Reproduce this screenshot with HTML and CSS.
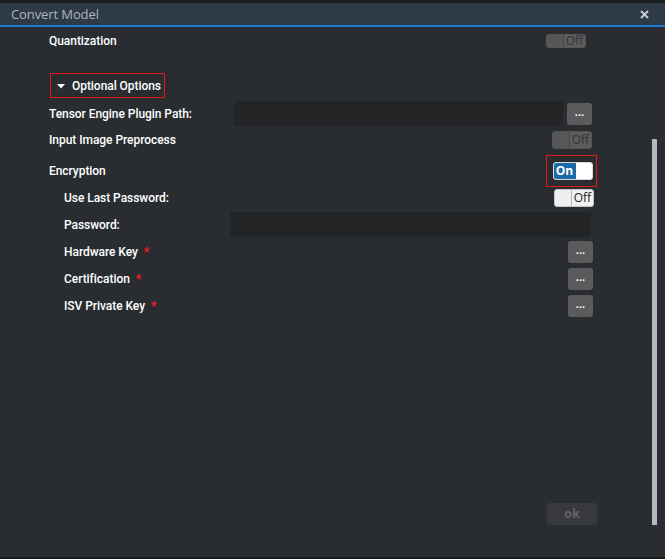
FILE: index.html
```html
<!DOCTYPE html>
<html>
<head>
<meta charset="utf-8">
<link rel="stylesheet" href="styles.css">
</head>
<body>
<div class="window">
  <div class="topstrip"></div>
  <div class="titlebar">
    <span class="title">Convert Model</span>
    <svg class="close" width="9" height="9" viewBox="0 0 9 9"><path d="M1 1 L8 8 M8 1 L1 8" stroke="#c8cdd2" stroke-width="2"/></svg>
  </div>
  <div class="content">
    <div class="row row-quant">
      <span class="label">Quantization</span>
      <span class="toggle toggle-disabled toggle-small"><span class="knob"></span><span class="ttext">Off</span></span>
    </div>
    <div class="row row-opt">
      <div class="opt-box">
        <svg class="tri" width="8" height="5" viewBox="0 0 8 5"><path d="M0 0 H8 L4 4.5 Z" fill="#ffffff"/></svg>
        <span class="label">Optional Options</span>
      </div>
    </div>
    <div class="row row-field">
      <span class="label wide">Tensor Engine Plugin Path:</span>
      <span class="input"></span>
      <span class="dots">...</span>
    </div>
    <div class="row row-toggle">
      <span class="label">Input Image Preprocess</span>
      <span class="toggle toggle-disabled t-pre"><span class="knob"></span><span class="ttext">Off</span></span>
    </div>
    <div class="row row-enc">
      <span class="label">Encryption</span>
      <span class="redbox"><span class="toggle toggle-on"><span class="ttext">On</span><span class="knob"></span></span></span>
    </div>
    <div class="row row-sub row-toggle2">
      <span class="label">Use Last Password:</span>
      <span class="toggle toggle-off"><span class="knob"></span><span class="ttext">Off</span></span>
    </div>
    <div class="row row-sub row-field2">
      <span class="label narrow">Password:</span>
      <span class="input pw"></span>
    </div>
    <div class="row row-sub row-field2">
      <span class="label narrow">Hardware Key <span class="req">*</span></span>
      <span class="input light"></span>
      <span class="dots">...</span>
    </div>
    <div class="row row-sub row-field2">
      <span class="label narrow">Certification <span class="req">*</span></span>
      <span class="input light"></span>
      <span class="dots">...</span>
    </div>
    <div class="row row-sub row-field2">
      <span class="label narrow">ISV Private Key <span class="req">*</span></span>
      <span class="input light"></span>
      <span class="dots">...</span>
    </div>
    <div class="spacer"></div>
    <div class="footer">
      <span class="ok">ok</span>
    </div>
  </div>
  <div class="scrollbar"></div>
  <div class="bottomline"></div>
</div>
</body>
</html>
```
FILE: styles.css
```css
* { box-sizing: border-box; }
html, body { margin: 0; padding: 0; }
body {
  width: 665px;
  height: 559px;
  background: #292d31;
  font-family: Roboto, "Open Sans", sans-serif;
  overflow: hidden;
}
.window {
  position: relative;
  width: 665px;
  height: 559px;
  display: flex;
  flex-direction: column;
  background: #292d31;
}
.topstrip { height: 3px; background: #1d2023; }
.titlebar {
  height: 24px;
  background: #2e3a47;
  border-bottom: 2px solid #1b78cf;
  display: flex;
  align-items: center;
  padding: 0 16px 0 11px;
}
.title {
  color: #aeb5bd;
  font-family: "Open Sans", sans-serif;
  font-size: 13px;
  flex: 1;
  letter-spacing: -0.1px;
}
.close { display: block; margin-top: 1px; }
.content {
  flex: 1;
  display: flex;
  flex-direction: column;
  padding: 5px 72px 0 49px;
}
.row {
  display: flex;
  align-items: center;
}
.label {
  color: #ffffff;
  font-size: 12px;
  font-weight: 500;
  white-space: nowrap;
  letter-spacing: -0.05px;
}
.row-quant { height: 18px; justify-content: space-between; padding-right: 7px; }
.row-opt { height: 25px; margin-top: 23px; }
.opt-box {
  border: 1px solid #e01818;
  height: 25px;
  display: flex;
  align-items: center;
  padding: 0 3px 0 6px;
  margin-left: 1px;
}
.tri { margin-right: 7px; margin-top: 1px; }
.row-field { height: 25px; margin-top: 3px; }
.label.wide { width: 185px; }
.input {
  flex: 1;
  height: 25px;
  background: #222426;
  border-radius: 3px;
}
.input.pw { background: #222426; height: 25px; }
.input.light { background: #272b2e; border-radius: 0; }
.dots {
  width: 25px;
  height: 22px;
  margin-left: 4px;
  background: #5b5b5b;
  border-radius: 3px;
  color: #ffffff;
  font-size: 11px;
  font-weight: bold;
  text-align: center;
  line-height: 20px;
}
.row-field .dots { margin-right: 1px; }
.row-toggle { height: 22px; margin-top: 3px; justify-content: space-between; padding-right: 1px; }
.row-enc { height: 32px; margin-top: 4px; justify-content: space-between; margin-right: -4px; }
.redbox {
  border: 1px solid #e01818;
  width: 51px;
  height: 32px;
  display: flex;
  align-items: center;
  justify-content: center;
  padding-left: 2px;
}
.row-sub { padding-left: 15px; }
.row-toggle2 { height: 22px; margin-top: 0; justify-content: space-between; margin-right: -1px; }
.row-field2 { height: 27px; }
.row-toggle2 + .row-field2 { margin-top: 2px; }
.label.narrow { width: 166px; }
.row-field2 .input.pw { margin-right: 2px; }
.row-field2 .dots { margin-left: 5px; margin-right: 0; }
.req { color: #ff1a1a; font-weight: bold; margin-left: 3px; }
.toggle {
  display: flex;
  width: 40px;
  height: 18px;
  border-radius: 3px;
  font-family: "Open Sans", sans-serif;
  font-size: 12px;
  line-height: 16px;
}
.toggle .knob { width: 17px; border-radius: 2px 0 0 2px; }
.toggle .ttext { flex: 1; text-align: center; }
.toggle-disabled { background: #5c5c5c; border: 1px solid #555; }
.toggle-disabled .knob { background: #575757; border-right: 1px solid #484848; }
.toggle-disabled .ttext { color: #333333; }
.toggle-small { height: 14px; line-height: 12px; }
.t-pre { width: 40px; }
.toggle-on { border: 1px solid #d8d8d8; background: #fff; }
.toggle-on .ttext { background: #1c6aa6; color: #fff; font-weight: bold; flex: 0 0 22px; border-radius: 2px 0 0 2px; }
.toggle-on .knob { flex: 1; background: #ffffff; border-radius: 0 2px 2px 0; }
.toggle-off { background: #f0f0f0; border: 1px solid #c4c4c4; }
.toggle-off .knob { background: #efefef; border-right: 1px solid #b8b8b8; }
.toggle-off .ttext { color: #1e1e1e; }
.spacer { flex: 1; }
.footer {
  display: flex;
  justify-content: flex-end;
  margin-right: -4px;
  margin-bottom: 34px;
}
.ok {
  width: 50px;
  height: 22px;
  background: #37393c;
  border-radius: 3px;
  color: #616366;
  font-family: "Open Sans", sans-serif;
  font-weight: bold;
  font-size: 13px;
  text-align: center;
  line-height: 21px;
}
.scrollbar {
  position: absolute;
  left: 652px;
  top: 139px;
  width: 5px;
  height: 386px;
  background: #b5b8c1;
  border-radius: 1px 1px 0 0;
}
.bottomline {
  position: absolute;
  left: 0;
  bottom: 0;
  width: 665px;
  height: 2px;
  background: #1a1c1e;
}
```
